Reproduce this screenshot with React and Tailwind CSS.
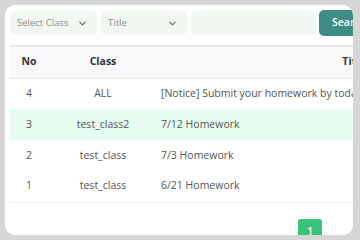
import { ChevronDown } from "lucide-react";

const ROWS = [
  { no: 4, cls: "ALL", title: "[Notice] Submit your homework by today", active: false },
  { no: 3, cls: "test_class2", title: "7/12 Homework", active: true },
  { no: 2, cls: "test_class", title: "7/3 Homework", active: false },
  { no: 1, cls: "test_class", title: "6/21 Homework", active: false },
];

function Select({ label, width }) {
  return (
    <div className={`${width} h-[24px] flex items-center justify-between rounded-[5px] bg-[#f1f8f1] pl-[7px] pr-[9px] text-[9.5px] text-[#8a8f8a]`}>
      <span>{label}</span>
      <ChevronDown size={11} strokeWidth={2.5} className="text-[#666]" />
    </div>
  );
}

export default function App() {
  return (
    <div className="w-[360px] h-[240px] overflow-hidden bg-[#d6d6d6] pt-[5px] pl-[5px]" style={{ fontFamily: "'Open Sans', 'DejaVu Sans', sans-serif" }}>
      <div className="w-[348px] h-[230px] overflow-hidden rounded-[10px] bg-white pt-[5px] pl-[5px]">
        <div className="w-[540px]">
          <div className="flex items-center gap-[4px]">
            <Select label="Select Class" width="w-[87px]" />
            <Select label="Title" width="w-[86px]" />
            <div className="w-[125px] h-[24px] rounded-[5px] bg-[#f1f8f1]" />
            <button className="ml-[-1px] w-[70px] h-[26px] rounded-[5px] bg-[#3e8d84] text-[10.5px] font-semibold text-white text-left pl-[13px]">
              Search
            </button>
          </div>

          <table className="mt-[9px] w-[540px] border-collapse text-[10.5px] text-[#555]">
            <thead>
              <tr className="h-[32px] bg-[#f8f9fa] border-t-2 border-b border-[#e6e9ec]">
                <th className="w-[38px] text-center font-bold text-[#333]">No</th>
                <th className="w-[110px] text-center font-bold text-[#333]">Class</th>
                <th className="text-center font-bold text-[#333]">Title</th>
              </tr>
            </thead>
            <tbody>
              {ROWS.map((r) => (
                <tr key={r.no} className={`h-[31px] ${r.active ? "bg-[#e9fcf1]" : ""} ${r.no === 1 ? "border-b border-[#eceeef]" : ""}`}>
                  <td className="text-center">{r.no}</td>
                  <td className="text-center">{r.cls}</td>
                  <td className="pl-[3px] whitespace-nowrap">{r.title}</td>
                </tr>
              ))}
            </tbody>
          </table>

          <div className="mt-[16px] pl-[288px]">
            <div className="w-[24px] h-[22px] rounded-[3px] bg-[#39c27b] text-white text-[10px] font-semibold flex justify-center pt-[5px]">1</div>
          </div>
        </div>
      </div>
    </div>
  );
}
